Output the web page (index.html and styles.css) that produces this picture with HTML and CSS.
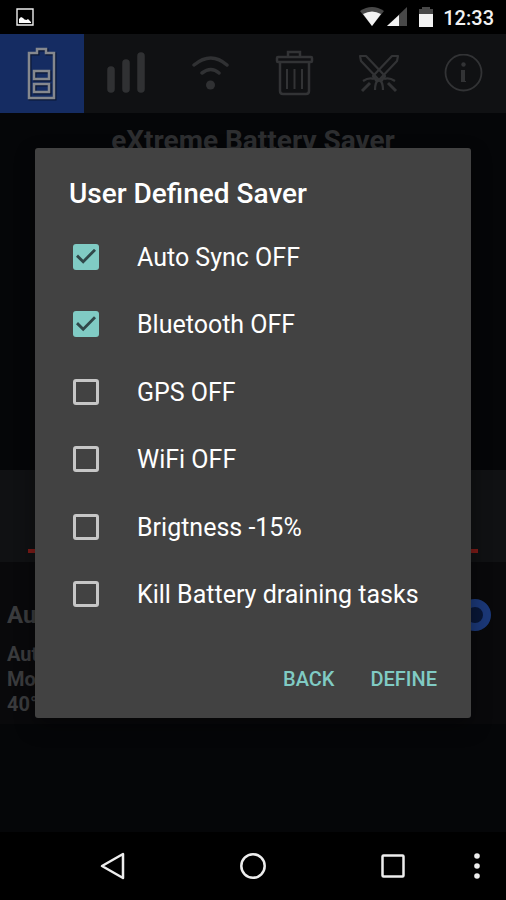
FILE: index.html
```html
<!DOCTYPE html>
<html lang="en">
<head>
<meta charset="utf-8">
<meta name="viewport" content="width=device-width, initial-scale=1">
<title>eXtreme Battery Saver</title>
<link rel="stylesheet" href="styles.css">
</head>
<body>
<header class="status">
  <svg class="status-picture" width="18" height="18" viewBox="0 0 18 18" aria-hidden="true"><path d="M1 1h16v16H1z" fill="none" stroke="#eee" stroke-width="1.4"/><path d="M3 15v-4l2-2 2 1 1.500 1.500 2 .5 1.500-1 3 3v1z" fill="#fff"/></svg>
  <div class="status-right">
    <svg width="24" height="20" viewBox="0 0 24 20" aria-hidden="true"><path d="M0 4Q12-4 24 4L12 19z" fill="#484848"/><path d="M3 7Q12 2 21 7L12 19z" fill="#f2f2f2"/></svg>
    <svg class="signal" width="20" height="20" viewBox="0 0 20 20" aria-hidden="true"><path d="M20 0v19H0z" fill="#484848"/><path d="M12 8v11H0z" fill="#f2f2f2"/></svg>
    <svg class="charge" width="14" height="20" viewBox="0 0 14 20" aria-hidden="true"><path d="M0 8V2h3V0h8v2h3v6z" fill="#484848"/><path d="M0 7h14v13H0z" fill="#f2f2f2"/></svg>
    <time class="clock">12:33</time>
  </div>
</header>
<div class="app">
  <nav class="tabs" aria-label="Sections">
    <button class="tab tab-active" aria-label="Battery">
      <svg width="30" height="56" viewBox="0 0 30 56"><g fill="none" stroke="#0b1734" stroke-width="3" transform="translate(1 1)"><path d="M2 7h8V3h9v4h8v45H2z"/><path d="M7 25h15v8H7zM7 38h15v8H7z"/></g><g fill="none" stroke="#85888e" stroke-width="2.500"><path d="M2 7h8V3h9v4h8v45H2z"/><path d="M7 25h15v8H7zM7 38h15v8H7z"/></g></svg>
    </button>
    <button class="tab" aria-label="Signal">
      <svg width="38" height="44" viewBox="0 0 38 44"><path d="M4 18v19M19 11v26M34 4v33" stroke="#303133" stroke-width="7.500" stroke-linecap="round"/></svg>
    </button>
    <button class="tab" aria-label="WiFi">
      <svg width="40" height="40" viewBox="0 0 40 40"><g fill="none" stroke="#303133" stroke-width="3.500" stroke-linecap="round"><path d="M3 11q17-14 33 0M11 19q9-7 17 0"/></g><circle cx="19.500" cy="31" r="4.500" fill="#303133"/></svg>
    </button>
    <button class="tab" aria-label="Clean">
      <svg width="40" height="50" viewBox="0 0 40 50"><g fill="none" stroke="#323335" stroke-width="2.500"><rect x="2" y="8" width="35" height="5" rx="1"/><path d="M13 8V3h12v5M5 13v29q0 3 3 3h23q3 0 3-3V13"/><path d="M12 20v20M19.500 20v20M27 20v20" stroke-width="2"/></g></svg>
    </button>
    <button class="tab" aria-label="Kill tasks">
      <svg width="40" height="40" viewBox="0 0 40 40"><g id="sword" fill="none" stroke="#323335" stroke-width="2.200" stroke-linejoin="round"><path d="M1 2h6l19 20-5 5L2 7z"/><path d="M26 22l-4 6M24 36q0-8-4-11M25 25q5-2 11 2"/><path d="M29 29l8 8" stroke-width="3"/></g><use href="#sword" transform="matrix(-1 0 0 1 40 0)"/></svg>
    </button>
    <button class="tab" aria-label="Info">
      <svg width="40" height="40" viewBox="0 0 40 40"><circle cx="19.500" cy="18.500" r="18" fill="none" stroke="#323335" stroke-width="1.800"/><path d="M17 16h4v11h1v1h-5v-1z" fill="#323335"/><circle cx="19.500" cy="10.500" r="2.200" fill="#323335"/></svg>
    </button>
  </nav>
  <main class="page">
    <h1 class="page-title">eXtreme Battery Saver</h1>
    <section class="saver"><div class="saver-line"></div></section>
    <section class="auto">
      <div class="auto-head"><h2 class="auto-title">Au</h2><span class="knob"></span></div>
      <p class="auto-text">Aut<br>Mo<br>40°</p>
    </section>
  </main>
  <div class="overlay">
    <form class="dialog" role="dialog" aria-labelledby="dialog-title">
      <h2 class="dialog-title" id="dialog-title">User Defined Saver</h2>
      <div class="options">
        <label class="option"><input class="check" type="checkbox" checked><span class="option-text">Auto Sync OFF</span></label>
        <label class="option"><input class="check" type="checkbox" checked><span class="option-text">Bluetooth OFF</span></label>
        <label class="option"><input class="check" type="checkbox"><span class="option-text">GPS OFF</span></label>
        <label class="option"><input class="check" type="checkbox"><span class="option-text">WiFi OFF</span></label>
        <label class="option"><input class="check" type="checkbox"><span class="option-text">Brigtness -15%</span></label>
        <label class="option"><input class="check" type="checkbox"><span class="option-text">Kill Battery draining tasks</span></label>
      </div>
      <div class="actions">
        <button class="action" type="button">BACK</button>
        <button class="action" type="button">DEFINE</button>
      </div>
    </form>
  </div>
</div>
<footer class="system">
  <button class="system-button" aria-label="Back"><svg width="28" height="28" viewBox="0 0 28 28"><path d="M24 2v24L3 14z" fill="none" stroke="#eee" stroke-width="2.500" stroke-linejoin="round"/></svg></button>
  <button class="system-button" aria-label="Home"><svg width="28" height="28" viewBox="0 0 28 28"><circle cx="14" cy="14" r="11.700" fill="none" stroke="#eee" stroke-width="2.500"/></svg></button>
  <button class="system-button" aria-label="Recent apps"><svg width="28" height="28" viewBox="0 0 28 28"><rect x="3.500" y="3.500" width="21" height="21" rx="1" fill="none" stroke="#eee" stroke-width="2.500"/></svg></button>
  <button class="system-button" aria-label="Menu"><svg width="8" height="28" viewBox="0 0 8 28"><g fill="#eee"><circle cx="4" cy="4" r="2.800"/><circle cx="4" cy="14" r="2.800"/><circle cx="4" cy="24" r="2.800"/></g></svg></button>
</footer>
</body>
</html>
```
FILE: styles.css
```css
* { box-sizing: border-box; }
body {
  margin: 0;
  min-height: 100vh;
  display: flex;
  flex-direction: column;
  background: #000;
  color: #fff;
  font-family: Roboto, "Liberation Sans", sans-serif;
}
h1, h2, p { margin: 0; }
button { border: 0; padding: 0; background: none; font: inherit; color: inherit; }
svg { display: block; }

.status {
  height: 34px;
  padding: 0 12px 0 16px;
  display: flex;
  align-items: center;
  justify-content: space-between;
}
.status-right { display: flex; align-items: center; }
.signal { margin-left: 3px; }
.charge { margin: 0 10px 0 12px; }
.clock { padding-top: 2px; font-size: 20px; line-height: 24px; font-weight: 500; color: #f2f2f2; }

.app {
  position: relative;
  flex: 1;
  display: flex;
  flex-direction: column;
}
.tabs { display: grid; grid-template-columns: repeat(6, 1fr); height: 79px; background: #101113; }
.tab { display: flex; align-items: center; justify-content: center; }
.tab-active { background: #152c62; }

.page { flex: 1; display: flex; flex-direction: column; background: #050608; }
.page-title {
  height: 357px;
  padding-top: 10px;
  text-align: center;
  font-size: 28px;
  line-height: 36px;
  font-weight: 700;
  color: #2d2e30;
}
.saver { height: 92px; padding: 79px 28px 0; background: #101113; }
.saver-line { height: 4px; background: #7b1a17; }
.auto { height: 162px; padding: 36px 7px 0; background: #09090b; color: #3a3b3d; }
.auto-head { display: flex; justify-content: space-between; align-items: center; height: 34px; padding-right: 8px; }
.auto-title { font-size: 24px; line-height: 34px; font-weight: 700; }
.auto-text { padding-top: 10px; font-size: 20px; line-height: 25px; font-weight: 700; }
.knob { width: 32px; height: 32px; border: 8px solid #1b3878; border-radius: 50%; background: #091737; }

.overlay {
  position: absolute;
  inset: 0;
  padding: 0 35px;
  display: flex;
  align-items: center;
}
.dialog {
  width: 100%;
  border-radius: 3px;
  background: #424242;
  box-shadow: 0 8px 20px rgba(0, 0, 0, 0.4);
}
.dialog-title {
  padding: 29px 34px 12px;
  font-size: 28px;
  line-height: 34px;
  font-weight: 500;
}
.options { display: grid; grid-auto-rows: 1fr; min-height: 405px; padding: 0 38px; }
.option { display: flex; align-items: center; gap: 38px; font-size: 25px; line-height: 34px; }
.option-text { padding-top: 2px; }
.check {
  appearance: none;
  flex: none;
  width: 26px;
  height: 26px;
  margin: 0;
  border: 3px solid #c6c6c6;
  border-radius: 3px;
}
.check:checked { display: grid; place-items: center; border: 0; background: #80cbc4; }
.check:checked::before {
  content: "";
  width: 20px;
  height: 16px;
  background: #30484a;
  clip-path: polygon(0 50%, 10% 36%, 36% 68%, 90% 0, 100% 12%, 36% 94%);
}
.actions { display: flex; justify-content: flex-end; align-items: center; gap: 36px; height: 90px; padding: 12px 34px 0 0; }
.action { font-size: 20px; line-height: 34px; font-weight: 500; color: #80cbc4; }

.system {
  height: 68px;
  padding: 0 15px 0 43px;
  display: grid;
  grid-template-columns: 5fr 5fr 5fr 1fr;
  align-items: center;
}
.system-button { display: flex; justify-content: center; }
```
